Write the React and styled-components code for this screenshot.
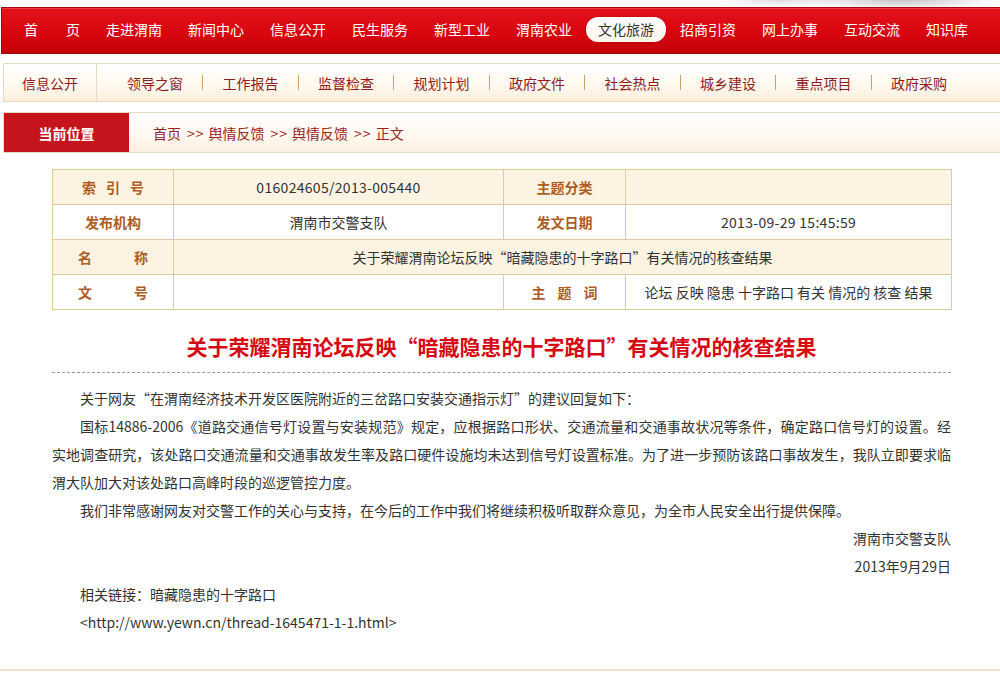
import React from 'react';
import styled, { createGlobalStyle } from 'styled-components';

const GlobalStyle = createGlobalStyle`
  html, body {
    margin: 0;
    padding: 0;
    background: #fff;
  }
  body {
    font-family: "Noto Sans CJK SC", "Microsoft YaHei", sans-serif;
    color: #333;
  }
`;

const Page = styled.div`
  width: 1000px;
  overflow: hidden;
`;

const TopStrip = styled.div`
  height: 7px;
  background:
    radial-gradient(ellipse 140px 14px at 900px 0, rgba(150, 150, 150, 0.55), rgba(255, 255, 255, 0) 70%),
    radial-gradient(ellipse 90px 10px at 780px 0, rgba(180, 180, 180, 0.45), rgba(255, 255, 255, 0) 70%),
    #fff;
`;

const MainNav = styled.nav`
  box-sizing: border-box;
  height: 47px;
  margin-left: 1px;
  display: flex;
  align-items: center;
  gap: 26px;
  padding: 0 0 3px 22px;
  border: 1px solid #a8000a;
  border-right: none;
  background: linear-gradient(#e2121b 0%, #d9060f 55%, #c20009 100%);
  box-shadow: inset 0 1px 0 rgba(255, 255, 255, 0.18);
`;

const NavItem = styled.a`
  flex: none;
  font-size: 14px;
  line-height: 25px;
  white-space: nowrap;
  color: ${p => (p.$active ? '#333' : '#fff')};
  ${p =>
    p.$active &&
    `
    padding: 0 12px;
    margin: 0 -12px;
    border-radius: 12px;
    background: linear-gradient(#ffffff, #fbf5e8);
    box-shadow: 0 0 2px rgba(120, 0, 0, 0.5);
  `}
`;

const SubNav = styled.div`
  margin: 9px 0 0 3px;
  height: 37px;
  display: flex;
  align-items: center;
  border: 1px solid #e6dac4;
  border-right: none;
  background: linear-gradient(#ffffff 0%, #fffaf1 50%, #fdf0dc 100%);
`;

const SubTitle = styled.div`
  height: 100%;
  display: flex;
  align-items: center;
  padding: 0 18px;
  border-right: 1px solid #e6dac4;
  font-size: 14px;
  color: #8e1c1c;
  margin-right: 30px;
`;

const SubLink = styled.a`
  font-size: 14px;
  color: #8e1c1c;
  white-space: nowrap;
`;

const SubSep = styled.span`
  width: 1px;
  height: 15px;
  margin: 0 19.5px 0 19px;
  background: #c9a46e;
`;

const Crumb = styled.div`
  margin: 10px 0 0 3px;
  height: 39px;
  display: flex;
  align-items: stretch;
  border: 1px solid #e6dac4;
  border-right: none;
  background: linear-gradient(#ffffff 0%, #fffaf2 50%, #fdf0de 100%);
`;

const CrumbLabel = styled.div`
  width: 125px;
  display: flex;
  align-items: center;
  justify-content: center;
  background: #c5141b;
  color: #fff;
  font-size: 14px;
  font-weight: bold;
`;

const CrumbPath = styled.div`
  display: flex;
  align-items: center;
  padding-left: 24px;
  font-size: 14px;
  color: #9b2323;
  white-space: nowrap;
`;

const CrumbArrow = styled.span`
  margin: 0 4px 0 6px;
  letter-spacing: 1px;
`;

const Content = styled.div`
  padding: 16px 49px 33px 52px;
  border-bottom: 2px solid #ede2cc;
`;

const InfoTable = styled.table`
  width: 899px;
  border-collapse: collapse;
  table-layout: fixed;
`;

const Row = styled.tr`
  height: 35px;
  background: ${p => (p.$shaded ? '#fdf3e2' : '#fff')};
`;

const Label = styled.td`
  border: 1px solid #dfcba3;
  text-align: center;
  font-size: 14px;
  font-weight: bold;
  color: #ad5c24;
  padding: 0;
  white-space: pre;
  letter-spacing: ${p => p.$ls || 0}px;
  text-indent: ${p => p.$ls || 0}px;
`;

const Value = styled.td`
  border: 1px solid #dfcba3;
  text-align: center;
  font-size: 14px;
  color: #333;
  padding: 0;
  white-space: nowrap;
  letter-spacing: ${p => (p.$digits ? '0.3px' : '0')};
`;

const Title = styled.h1`
  margin: 21px 0 0;
  font-size: 21px;
  line-height: 30px;
  font-weight: bold;
  color: #d60a12;
  text-align: center;
`;

const Divider = styled.div`
  margin-top: 11px;
  border-top: 1px dashed #9a9a9a;
`;

const Body = styled.div`
  margin-top: 11px;
  font-size: 14px;
  line-height: 28px;
  color: #333;
`;

const Line = styled.div`
  white-space: ${p => (p.$justify ? 'normal' : 'nowrap')};
  padding-left: ${p => (p.$indent ? '28px' : '0')};
  text-align: ${p => (p.$justify ? 'justify' : p.$right ? 'right' : 'left')};
  text-align-last: ${p => (p.$justify ? 'justify' : 'auto')};
`;

const mainNav = ['首　　页', '走进渭南', '新闻中心', '信息公开', '民生服务', '新型工业', '渭南农业', '文化旅游', '招商引资', '网上办事', '互动交流', '知识库'];
const subNav = ['领导之窗', '工作报告', '监督检查', '规划计划', '政府文件', '社会热点', '城乡建设', '重点项目', '政府采购'];
const crumbs = ['首页', '舆情反馈', '舆情反馈', '正文'];

const App = () => {
  return (
    <Page>
      <GlobalStyle />
      <TopStrip />
      <MainNav>
        {mainNav.map(item => (
          <NavItem key={item} $active={item === '文化旅游'}>
            {item}
          </NavItem>
        ))}
      </MainNav>

      <SubNav>
        <SubTitle>信息公开</SubTitle>
        {subNav.map((item, i) => (
          <React.Fragment key={item}>
            {i > 0 && <SubSep />}
            <SubLink>{item}</SubLink>
          </React.Fragment>
        ))}
      </SubNav>

      <Crumb>
        <CrumbLabel>当前位置</CrumbLabel>
        <CrumbPath>
          {crumbs.map((c, i) => (
            <React.Fragment key={i}>
              {i > 0 && <CrumbArrow>&gt;&gt;</CrumbArrow>}
              <span>{c}</span>
            </React.Fragment>
          ))}
        </CrumbPath>
      </Crumb>

      <Content>
        <InfoTable>
          <colgroup>
            <col style={{ width: 121 }} />
            <col style={{ width: 330 }} />
            <col style={{ width: 122 }} />
            <col style={{ width: 326 }} />
          </colgroup>
          <tbody>
            <Row $shaded>
              <Label $ls={10}>索引号</Label>
              <Value $digits>016024605/2013-005440</Value>
              <Label>主题分类</Label>
              <Value></Value>
            </Row>
            <Row>
              <Label>发布机构</Label>
              <Value>渭南市交警支队</Value>
              <Label>发文日期</Label>
              <Value $digits>2013-09-29 15:45:59</Value>
            </Row>
            <Row $shaded>
              <Label>名　　　称</Label>
              <Value colSpan={3}>关于荣耀渭南论坛反映“暗藏隐患的十字路口”有关情况的核查结果</Value>
            </Row>
            <Row>
              <Label>文　　　号</Label>
              <Value></Value>
              <Label $ls={12}>主题词</Label>
              <Value>论坛 反映 隐患 十字路口 有关 情况的 核查 结果</Value>
            </Row>
          </tbody>
        </InfoTable>

        <Title>关于荣耀渭南论坛反映“暗藏隐患的十字路口”有关情况的核查结果</Title>
        <Divider />

        <Body>
          <Line $indent>关于网友“在渭南经济技术开发区医院附近的三岔路口安装交通指示灯”的建议回复如下：</Line>
          <Line $indent $justify>国标14886-2006《道路交通信号灯设置与安装规范》规定，应根据路口形状、交通流量和交通事故状况等条件，确定路口信号灯的设置。经</Line>
          <Line $justify>实地调查研究，该处路口交通流量和交通事故发生率及路口硬件设施均未达到信号灯设置标准。为了进一步预防该路口事故发生，我队立即要求临</Line>
          <Line>渭大队加大对该处路口高峰时段的巡逻管控力度。</Line>
          <Line $indent>我们非常感谢网友对交警工作的关心与支持，在今后的工作中我们将继续积极听取群众意见，为全市人民安全出行提供保障。</Line>
          <Line $right>渭南市交警支队</Line>
          <Line $right>2013年9月29日</Line>
          <Line $indent>相关链接：暗藏隐患的十字路口</Line>
          <Line $indent>&lt;http://www.yewn.cn/thread-1645471-1-1.html&gt;</Line>
        </Body>
      </Content>
    </Page>
  );
};

export default App;
